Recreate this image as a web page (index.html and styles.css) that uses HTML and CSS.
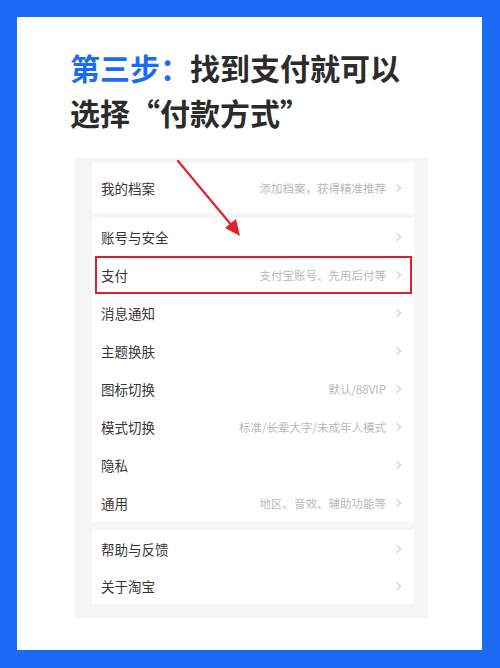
FILE: index.html
```html
<!DOCTYPE html>
<html lang="zh-CN">
<head>
<meta charset="utf-8">
<link rel="stylesheet" href="styles.css">
</head>
<body>
<div class="frame">
  <div class="sheet">
    <h1 class="title"><span class="step">第三步：</span>找到支付就可以<br>选择“付款方式”</h1>
    <div class="panel">
      <div class="card card-top">
        <div class="row"><span class="label">我的档案</span><span class="hint">添加档案，获得精准推荐</span><span class="chev"></span></div>
      </div>
      <div class="card card-main">
        <div class="row"><span class="label">账号与安全</span><span class="hint"></span><span class="chev"></span></div>
        <div class="row row-pay"><span class="label">支付</span><span class="hint">支付宝账号、先用后付等</span><span class="chev"></span></div>
        <div class="row"><span class="label">消息通知</span><span class="hint"></span><span class="chev"></span></div>
        <div class="row"><span class="label">主题换肤</span><span class="hint"></span><span class="chev"></span></div>
        <div class="row"><span class="label">图标切换</span><span class="hint">默认/88VIP</span><span class="chev"></span></div>
        <div class="row"><span class="label">模式切换</span><span class="hint">标准/长辈大字/未成年人模式</span><span class="chev"></span></div>
        <div class="row"><span class="label">隐私</span><span class="hint"></span><span class="chev"></span></div>
        <div class="row"><span class="label">通用</span><span class="hint">地区、音效、辅助功能等</span><span class="chev"></span></div>
      </div>
      <div class="card card-bottom">
        <div class="row"><span class="label">帮助与反馈</span><span class="hint"></span><span class="chev"></span></div>
        <div class="row"><span class="label">关于淘宝</span><span class="hint"></span><span class="chev"></span></div>
      </div>
      <svg class="arrow" width="80" height="90" viewBox="0 0 80 90">
        <line x1="3" y1="3" x2="58" y2="69" stroke="#e0222a" stroke-width="2.2" stroke-linecap="round"/>
        <polygon points="65,78 50,70 61,61" fill="#e0222a"/>
      </svg>
    </div>
  </div>
</div>
</body>
</html>
```
FILE: styles.css
```css
* { box-sizing: border-box; }
html, body { margin: 0; padding: 0; }
body {
  background: #1c6bf4;
  font-family: "Noto Sans CJK SC", "Noto Sans", sans-serif;
}
.frame {
  width: 500px;
  height: 668px;
  padding: 17px 18px 18px 17px;
}
.sheet {
  background: #ffffff;
  width: 465px;
  height: 633px;
  padding: 28px 0 0 53px;
}
.title {
  margin: 0;
  font-size: 30px;
  line-height: 45px;
  font-weight: 700;
  color: #2b2b2b;
  letter-spacing: 0;
}
.step { color: #1c6bf4; }
.panel {
  position: relative;
  margin: 23px 0 0 5px;
  width: 353px;
  background: #f6f6f6;
  padding: 5px 14px 14px 17px;
}
.card {
  background: #ffffff;
}
.card-top .row { height: 50px; }
.card-main { margin-top: 5px; }
.card-main .row { height: 38px; }
.card-bottom { margin-top: 8px; }
.card-bottom .row { height: 37px; }
.row {
  display: flex;
  align-items: center;
  padding: 0 12px 0 9px;
}
.label {
  font-size: 13.5px;
  color: #363636;
  flex: 1;
}
.hint {
  font-size: 11.5px;
  color: #b9b9b9;
  margin-right: 8px;
}
.chev {
  width: 6px;
  height: 6px;
  border-top: 1px solid #c8c8c8;
  border-right: 1px solid #c8c8c8;
  transform: rotate(45deg);
  margin-right: 2px;
}
.row-pay {
  outline: 2px solid #d8232a;
  outline-offset: -2px;
  margin: 0 2px 0 3px;
  padding-left: 6px;
  padding-right: 10px;
}
.arrow {
  position: absolute;
  left: 100px;
  top: 0px;
}
```
